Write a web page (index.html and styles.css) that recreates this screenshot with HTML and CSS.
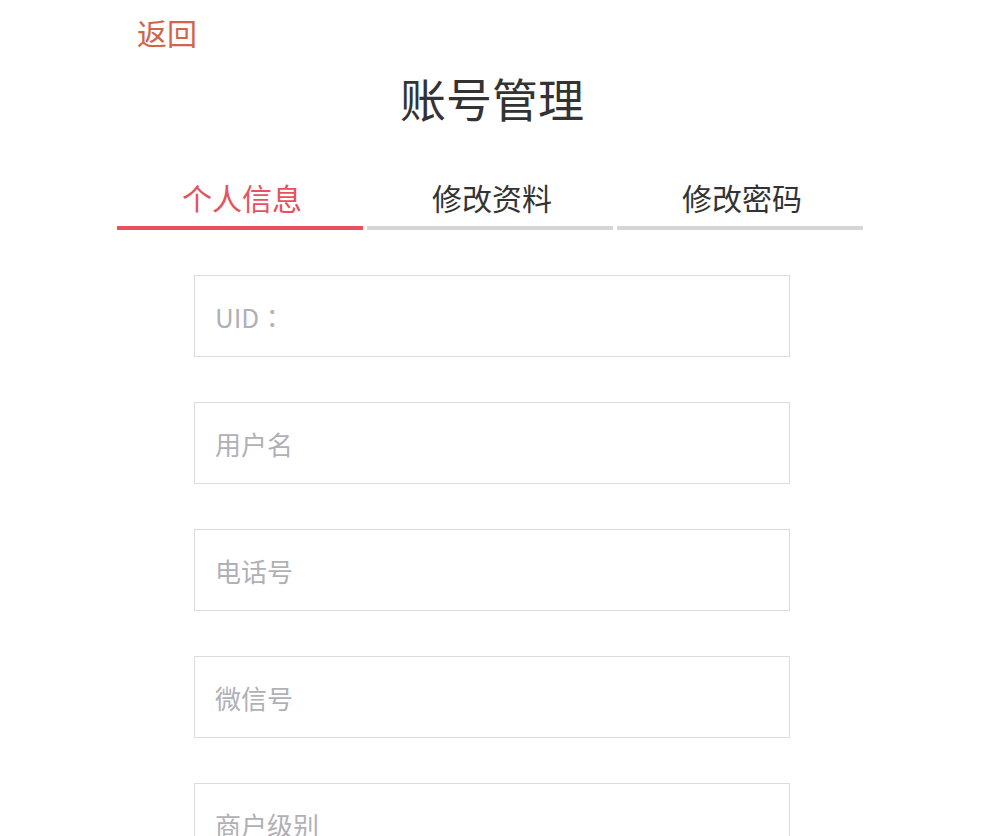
FILE: index.html
```html
<!DOCTYPE html>
<html lang="zh-CN">
<head>
    <meta charset="UTF-8">
    <meta name="viewport" content="width=device-width, initial-scale=1.0">
    <title>账号管理</title>
    <link rel="stylesheet" href="styles.css">
</head>
<body>

    <div class="page">
        <a class="back" href="#">返回</a>
        <h1 class="title">账号管理</h1>

        <div class="tabs">
            <div class="tab active">个人信息</div>
            <div class="tab">修改资料</div>
            <div class="tab">修改密码</div>
        </div>

        <form class="info-form">
            <input class="uid-field" lang="zh-TW" type="text" name="uid" placeholder="UID：" readonly>
            <input type="text" name="username" placeholder="用户名">
            <input type="text" name="phone" placeholder="电话号">
            <input type="text" name="wechat" placeholder="微信号">
            <input type="text" name="level" placeholder="商户级别" readonly>
        </form>
    </div>

</body>
</html>
```

FILE: styles.css
```css
body {
    font-family: "Noto Sans CJK SC", "Noto Sans", sans-serif;
    background-color: #fff;
    color: #333;
    margin: 0;
}

.page {
    width: 746px;
    margin-left: 117px;
    padding-top: 12px;
}

.back {
    display: inline-block;
    margin-left: 20px;
    font-size: 30px;
    line-height: 40px;
    color: #d0654a;
    text-decoration: none;
}

.title {
    margin: 22px 0 0;
    padding-left: 4px;
    font-size: 46px;
    font-weight: normal;
    line-height: 46px;
    text-align: center;
    color: #333;
}

.tabs {
    display: flex;
    gap: 4px;
    margin-top: 62px;
}

.tab {
    flex: 1;
    padding: 0 0 14px 4px;
    border-bottom: 4px solid #d6d6d6;
    font-size: 30px;
    line-height: 30px;
    text-align: center;
    color: #333;
}

.tab.active {
    color: #e8515c;
    border-bottom-color: #e8515c;
}

.info-form {
    display: flex;
    flex-direction: column;
    gap: 45px;
    width: 596px;
    margin: 45px 0 0 77px;
}

.info-form input {
    box-sizing: border-box;
    height: 82px;
    padding: 0 20px;
    border: 1px solid #dcdcdc;
    border-radius: 0;
    outline: none;
    font-family: inherit;
    font-size: 26px;
    color: #333;
}

.info-form input::placeholder {
    color: #b0b0b6;
}

/* centred full-width colon */
.info-form .uid-field {
    font-family: "Noto Sans CJK TC", "Noto Sans CJK SC", sans-serif;
}
```
